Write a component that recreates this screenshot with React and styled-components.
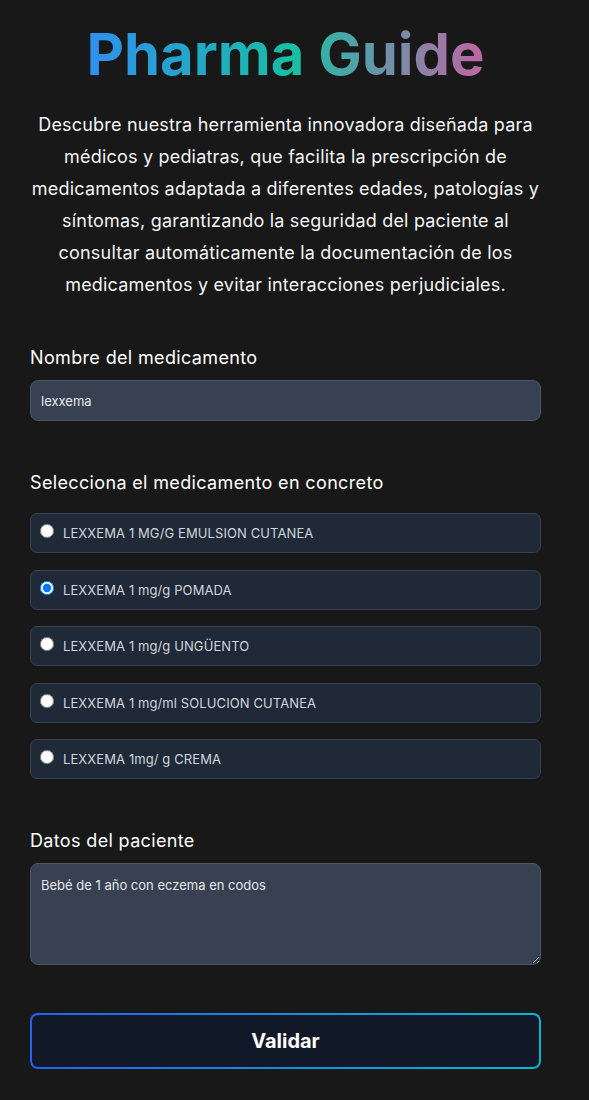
import React, { useState } from "react";
import styled, { createGlobalStyle } from "styled-components";

const GlobalStyle = createGlobalStyle`
  html, body {
    margin: 0;
    padding: 0;
    background: #181818;
  }
  body {
    font-family: Inter, "Noto Sans", "Liberation Sans", sans-serif;
    color: #ffffff;
  }
  * { box-sizing: border-box; }
`;

const Page = styled.main`
  padding: 25px 48px 40px 30px;
  display: flex;
  flex-direction: column;
`;

const Header = styled.header`
  display: flex;
  flex-direction: column;
  align-items: center;
  text-align: center;
`;

const Title = styled.h1`
  display: inline-block;
  margin: 0;
  font-size: 58px;
  line-height: 58px;
  font-weight: 700;
  background: linear-gradient(90deg, #2f8ff0 0%, #18bfa2 52%, #5c9ca8 70%, #c164a4 100%);
  -webkit-background-clip: text;
  background-clip: text;
  color: transparent;
`;

const Intro = styled.p`
  margin: 26px 0 0;
  font-size: 18px;
  line-height: 32px;
  letter-spacing: 0.2px;
  color: #f3f4f6;
`;

const Field = styled.section`
  display: flex;
  flex-direction: column;
  margin-top: ${(p) => p.$top}px;
`;

const Label = styled.label`
  font-size: 18px;
  line-height: 28px;
  font-weight: 400;
  letter-spacing: 0.35px;
  color: #ffffff;
  margin-bottom: ${(p) => p.$gap || 8}px;
`;

const TextInput = styled.input`
  height: 41px;
  width: 100%;
  padding: 0 10px;
  background: #374151;
  border: 1px solid #4b5563;
  border-radius: 8px;
  color: #e5e7eb;
  font-family: inherit;
  font-size: 13px;
  outline: none;
`;

const OptionList = styled.div`
  display: flex;
  flex-direction: column;
  gap: 16.5px;
`;

const Option = styled.label`
  display: flex;
  align-items: center;
  height: 40px;
  padding: 0 9px;
  background: #1f2937;
  border: 1px solid #374151;
  border-radius: 7px;
  cursor: pointer;
  font-size: 13px;
  letter-spacing: 0.1px;
  color: #d1d5db;
`;

const Radio = styled.input`
  margin: 0 9px 0 0;
  width: 14px;
  height: 14px;
  flex: none;
  position: relative;
  top: -2px;
`;

const TextArea = styled.textarea`
  height: 102px;
  width: 100%;
  padding: 11px 10px;
  background: #374151;
  border: 1px solid #4b5563;
  border-radius: 8px;
  color: #e5e7eb;
  font-family: inherit;
  font-size: 13px;
  line-height: 20px;
  outline: none;
  resize: vertical;
`;

const SubmitButton = styled.button`
  margin-top: 48px;
  height: 56px;
  width: 100%;
  border: 2px solid transparent;
  border-radius: 8px;
  background:
    linear-gradient(#111827, #111827) padding-box,
    linear-gradient(90deg, #2563eb, #06b6d4) border-box;
  color: #ffffff;
  font-family: inherit;
  font-size: 20px;
  font-weight: 700;
  cursor: pointer;
`;

const options = [
  "LEXXEMA 1 MG/G EMULSION CUTANEA",
  "LEXXEMA 1 mg/g POMADA",
  "LEXXEMA 1 mg/g UNGÜENTO",
  "LEXXEMA 1 mg/ml SOLUCION CUTANEA",
  "LEXXEMA 1mg/ g CREMA",
];

export default function App() {
  const [selected, setSelected] = useState(1);
  const [name, setName] = useState("lexxema");
  const [patient, setPatient] = useState("Bebé de 1 año con eczema en codos");

  return (
    <>
      <GlobalStyle />
      <Page>
        <Header>
          <Title>Pharma Guide</Title>
          <Intro>
            Descubre nuestra herramienta innovadora diseñada para médicos y
            pediatras, que facilita la prescripción de medicamentos adaptada a
            diferentes edades, patologías y síntomas, garantizando la seguridad
            del paciente al consultar automáticamente la documentación de los
            medicamentos y evitar interacciones perjudiciales.
          </Intro>
        </Header>

        <Field $top={43}>
          <Label htmlFor="med">Nombre del medicamento</Label>
          <TextInput id="med" value={name} onChange={(e) => setName(e.target.value)} />
        </Field>

        <Field $top={48}>
          <Label $gap={16}>Selecciona el medicamento en concreto</Label>
          <OptionList>
            {options.map((o, i) => (
              <Option key={o}>
                <Radio
                  type="radio"
                  name="med-option"
                  checked={selected === i}
                  onChange={() => setSelected(i)}
                />
                {o}
              </Option>
            ))}
          </OptionList>
        </Field>

        <Field $top={48}>
          <Label htmlFor="patient">Datos del paciente</Label>
          <TextArea id="patient" value={patient} onChange={(e) => setPatient(e.target.value)} />
        </Field>

        <SubmitButton type="button">Validar</SubmitButton>
      </Page>
    </>
  );
}
